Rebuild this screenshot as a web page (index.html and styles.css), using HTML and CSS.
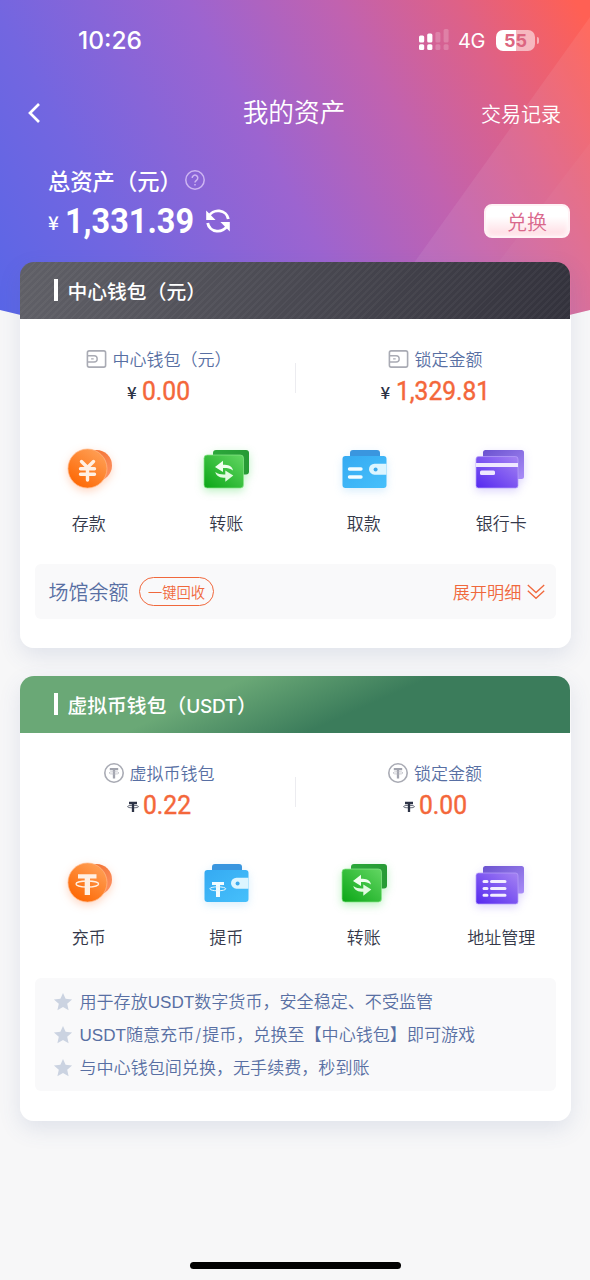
FILE: index.html
```html
<!DOCTYPE html>
<html lang="zh-CN">
<head>
<meta charset="utf-8">
<title>我的资产</title>
<link rel="stylesheet" href="styles.css">
</head>
<body>
<svg class="defs" width="0" height="0" aria-hidden="true">
  <defs>
    <linearGradient id="orange" x1="0.9" y1="0" x2="0.2" y2="1"><stop offset="0" stop-color="#ffa45c"/><stop offset="1" stop-color="#fd6500"/></linearGradient>
    <linearGradient id="orangeBack" x1="0" y1="0" x2="1" y2="1"><stop offset="0" stop-color="#ef6a22"/><stop offset="1" stop-color="#ff9468"/></linearGradient>
    <linearGradient id="green" x1="1" y1="0" x2="0" y2="1"><stop offset="0" stop-color="#63d663"/><stop offset="1" stop-color="#0aa616"/></linearGradient>
    <linearGradient id="greenBack" x1="0" y1="0" x2="1" y2="0"><stop offset="0" stop-color="#2ba83a"/><stop offset="1" stop-color="#279a35"/></linearGradient>
    <linearGradient id="blue" x1="0" y1="0" x2="1" y2="1"><stop offset="0" stop-color="#35aaf2"/><stop offset="1" stop-color="#46c0fb"/></linearGradient>
    <linearGradient id="purple" x1="1" y1="0" x2="0" y2="1"><stop offset="0" stop-color="#a583f2"/><stop offset="1" stop-color="#5428f0"/></linearGradient>
    <linearGradient id="purpleBack" x1="0" y1="0" x2="1" y2="1"><stop offset="0" stop-color="#6a52cf"/><stop offset="1" stop-color="#a98cf8"/></linearGradient>
    <symbol id="i-wallet" viewBox="0 0 20 18">
      <rect x="0.9" y="0.9" width="18.2" height="16.2" rx="1.8" fill="none" stroke="#a9abb4" stroke-width="1.6"/>
      <path d="M1 5.8h6.600a3.100 3.100 0 0 1 0 6.200H1M4.600 8.900h2.600" fill="none" stroke="#a9abb4" stroke-width="1.400"/>
    </symbol>
    <symbol id="i-token" viewBox="0 0 20 20">
      <circle cx="10" cy="10" r="9.2" fill="none" stroke="#a9abb4" stroke-width="1.6"/>
      <path d="M5.800 6.200h8.400M10 6.200v9.300" fill="none" stroke="#a2a4ae" stroke-width="2.3"/>
      <ellipse cx="10" cy="9.900" rx="5" ry="1.200" fill="none" stroke="#b4b6be" stroke-width="0.7"/>
    </symbol>
    <symbol id="i-unit" viewBox="0 0 12 12">
      <path d="M2 2h8M6 2v9" fill="none" stroke="#2d3346" stroke-width="2.3"/>
      <ellipse cx="6" cy="5.600" rx="5.500" ry="1.300" fill="none" stroke="#2d3346" stroke-width="0.7"/>
    </symbol>
    <symbol id="i-star" viewBox="0 0 20 20">
      <path d="M10 .9l2.600 5.800 6.500.7-4.900 4.300 1.400 6.500L10 15l-5.600 3.200 1.400-6.500L.9 7.400l6.500-.7z" fill="#cbd3e1"/>
    </symbol>
    <symbol id="i-transfer" viewBox="0 0 60 56">
      <rect x="17" y="8" width="36" height="24.500" rx="3" fill="url(#greenBack)"/>
      <rect x="8" y="13" width="39.500" height="33" rx="3.200" fill="url(#green)" stroke="#8ae68b" stroke-width="0.7"/>
      <path d="M19 25l8-6.200v4c5 0 9 1 10 5.700-3-2.300-6-2.500-10-2.400v4z" fill="#efffef"/>
      <path d="M37.300 33.500l-8 6.200v-4c-5 0-9-1-10-5.700 3 2.300 6 2.500 10 2.400v-4z" fill="#e2fbe2"/>
    </symbol>
  </defs>
</svg>

<div class="page">
  <svg class="hero-bg" viewBox="0 0 590 320" aria-hidden="true">
    <defs>
      <linearGradient id="hero" gradientUnits="userSpaceOnUse" x1="-8" y1="310" x2="575" y2="0">
        <stop offset="0" stop-color="#5866e7"/><stop offset="0.22" stop-color="#7366e0"/><stop offset="0.48" stop-color="#9c64d0"/><stop offset="0.68" stop-color="#c162af"/><stop offset="0.84" stop-color="#de6187"/><stop offset="1" stop-color="#ff6054"/>
      </linearGradient>
      <clipPath id="curve"><path d="M0 0H590V310Q295 384 0 310Z"/></clipPath>
    </defs>
    <g clip-path="url(#curve)">
      <rect width="590" height="320" fill="url(#hero)"/>
      <path d="M590 17V320H373z" fill="#fff" fill-opacity="0.07"/>
      <path d="M590 143V320H454z" fill="#fff" fill-opacity="0.03"/>
    </g>
  </svg>

  <header class="status">
    <span class="clock">10:26</span>
    <div class="status-right">
      <svg width="30" height="22" viewBox="0 0 30 22" fill="#fff">
        <rect x="0" y="6.500" width="5.200" height="7" rx="1.500"/><rect x="0" y="15.300" width="5.200" height="5.700" rx="1.500"/>
        <rect x="8.200" y="4.500" width="5.200" height="9" rx="1.500"/><rect x="8.200" y="15.300" width="5.200" height="5.700" rx="1.500"/>
        <g fill-opacity=".2"><rect x="16.400" y="3" width="5" height="10.500" rx="1.500"/><rect x="16.400" y="15.300" width="5" height="5.700" rx="1.500"/>
        <rect x="24.600" y="0" width="5" height="13.500" rx="1.500"/><rect x="24.600" y="15.300" width="5" height="5.700" rx="1.500"/></g>
      </svg>
      <span class="net">4G</span>
      <span class="battery"><span class="battery-level">55</span></span>
    </div>
  </header>

  <nav class="nav">
    <svg class="back" width="14" height="22" viewBox="0 0 14 22"><path d="M12 2L3 11l9 9" fill="none" stroke="#fff" stroke-width="2.700"/></svg>
    <h1 class="title">我的资产</h1>
    <a class="records">交易记录</a>
  </nav>

  <section class="total">
    <div class="total-main">
      <div class="total-label"><span>总资产（元）</span>
        <svg width="20" height="20" viewBox="0 0 20 20" fill="none" stroke="#cdb5f2" stroke-width="1.500"><circle cx="10" cy="10" r="9.200"/><path d="M7.200 8a2.800 2.800 0 1 1 4.300 2.300c-1 .7-1.500 1.100-1.500 2.300M10 13.900v1.600"/></svg>
      </div>
      <div class="total-value">
        <span class="yen">¥</span>
        <svg class="num" width="129" height="38"><text x="0" y="30" font-size="35.500" font-weight="700" fill="#fff" textLength="129" lengthAdjust="spacingAndGlyphs">1,331.39</text></svg>
        <svg class="refresh" width="26" height="26" viewBox="0 0 26 26"><g fill="none" stroke="#fff" stroke-width="2.900"><path d="M3.600 8.800A10.300 9.600 0 0 1 23.300 11"/><path d="M22.400 17.200A10.300 9.600 0 0 1 2.700 15"/></g><path d="M1.200 2.500V12H10.600zM24.800 23.500V14H15.400z" fill="#fff"/></svg>
      </div>
    </div>
    <button class="exchange">兑换</button>
  </section>

  <section class="card">
    <h2 class="card-head dark"><i class="mark"></i><span>中心钱包（元）</span></h2>
    <div class="balances">
      <div class="balance center-balance">
        <div class="balance-label"><svg width="21" height="18"><use href="#i-wallet"/></svg><span>中心钱包（元）</span></div>
        <div class="balance-value"><span class="unit">¥</span><svg class="num" width="48" height="30"><text x="0" y="24" textLength="48" lengthAdjust="spacingAndGlyphs">0.00</text></svg></div>
      </div>
      <div class="balance locked">
        <div class="balance-label"><svg width="21" height="18"><use href="#i-wallet"/></svg>锁定金额</div>
        <div class="balance-value"><span class="unit">¥</span><svg class="num" width="94" height="30"><text x="0" y="24" textLength="94" lengthAdjust="spacingAndGlyphs">1,329.81</text></svg></div>
      </div>
    </div>
    <div class="actions">
      <div class="action">
        <svg class="glow-orange" width="60" height="56" viewBox="0 0 60 56"><circle cx="37.500" cy="23.500" r="15.500" fill="url(#orangeBack)"/><circle cx="28.500" cy="26.500" r="19.500" fill="url(#orange)" stroke="#ffb98a" stroke-width=".7"/><path d="M22.500 19.500l6 6 6-6M21.500 26.800h14M21.500 32.200h14M28.500 26v12" fill="none" stroke="#fff0e4" stroke-width="3.400" stroke-linecap="round"/></svg>
        <span>存款</span>
      </div>
      <div class="action"><svg class="glow-green" width="60" height="56"><use href="#i-transfer"/></svg><span>转账</span></div>
      <div class="action">
        <svg class="glow-blue" width="60" height="56" viewBox="0 0 60 56"><rect x="16" y="8" width="30" height="14" rx="3" fill="#3a96df"/><rect x="8.500" y="14" width="44" height="32" rx="3" fill="url(#blue)"/><path d="M52.500 21.700H40.500a5.500 5.500 0 0 0 0 11H52.500z" fill="#dcf5ff"/><circle cx="41.600" cy="27.500" r="2" fill="#3ca9ec"/><path d="M15.500 27H27M15.500 35H27" stroke="#f2fcff" stroke-width="3.400" stroke-linecap="round"/></svg>
        <span>取款</span>
      </div>
      <div class="action">
        <svg class="glow-purple" width="60" height="56" viewBox="0 0 60 56"><rect x="12" y="8" width="41" height="29" rx="2.500" fill="url(#purpleBack)"/><rect x="5" y="14.500" width="42" height="31.500" rx="2.500" fill="url(#purple)" stroke="#b7a0fa" stroke-width=".7"/><path d="M5 21H47V25H5z" fill="#eee8ff"/><rect x="9" y="28.500" width="15" height="4.500" rx="1.500" fill="#eee8ff"/></svg>
        <span>银行卡</span>
      </div>
    </div>
    <div class="venue">
      <span class="venue-label">场馆余额</span>
      <button class="recover">一键回收</button>
      <a class="expand">展开明细<svg width="18" height="16" viewBox="0 0 18 16"><path d="M.8 1L9 8.500 17.200 1M.8 6.700L9 14.300 17.200 6.700" fill="none" stroke="#f0683c" stroke-width="1.300"/></svg></a>
    </div>
  </section>

  <section class="card">
    <h2 class="card-head teal"><i class="mark"></i><span>虚拟币钱包（<span class="latin">USDT</span>）</span></h2>
    <div class="balances">
      <div class="balance token-balance">
        <div class="balance-label"><svg width="20" height="20"><use href="#i-token"/></svg>虚拟币钱包</div>
        <div class="balance-value"><svg class="unit-token" width="12" height="12"><use href="#i-unit"/></svg><svg class="num" width="48" height="30"><text x="0" y="24" textLength="48" lengthAdjust="spacingAndGlyphs">0.22</text></svg></div>
      </div>
      <div class="balance locked">
        <div class="balance-label"><svg width="20" height="20"><use href="#i-token"/></svg>锁定金额</div>
        <div class="balance-value"><svg class="unit-token" width="12" height="12"><use href="#i-unit"/></svg><svg class="num" width="48" height="30"><text x="0" y="24" textLength="48" lengthAdjust="spacingAndGlyphs">0.00</text></svg></div>
      </div>
    </div>
    <div class="actions">
      <div class="action">
        <svg class="glow-orange" width="60" height="56" viewBox="0 0 60 56"><circle cx="37.500" cy="23.500" r="15.500" fill="url(#orangeBack)"/><circle cx="28.500" cy="26.500" r="19.500" fill="url(#orange)" stroke="#ffb98a" stroke-width=".7"/><path d="M19 18.200H37.500V22.500H31V39H25.700V22.500H19z" fill="#fff0e4"/><ellipse cx="28.300" cy="28" rx="11.300" ry="3" fill="none" stroke="#fff0e4" stroke-width="1.300"/></svg>
        <span>充币</span>
      </div>
      <div class="action">
        <svg class="glow-blue" width="60" height="56" viewBox="0 0 60 56"><rect x="16" y="8" width="30" height="14" rx="3" fill="#3a96df"/><rect x="8.500" y="14" width="44" height="32" rx="3" fill="url(#blue)"/><path d="M52.500 21.700H40.500a5.500 5.500 0 0 0 0 11H52.500z" fill="#dcf5ff"/><circle cx="41.600" cy="27.500" r="2" fill="#3ca9ec"/><path d="M16 26H28V29H24V41H20V29H16z" fill="#f2fcff"/><ellipse cx="21.800" cy="32.800" rx="8" ry="2" fill="none" stroke="#e6f8ff" stroke-width="1"/></svg>
        <span>提币</span>
      </div>
      <div class="action"><svg class="glow-green" width="60" height="56"><use href="#i-transfer"/></svg><span>转账</span></div>
      <div class="action">
        <svg class="glow-purple" width="60" height="56" viewBox="0 0 60 56"><rect x="12" y="10" width="41" height="27.500" rx="2.500" fill="url(#purpleBack)"/><rect x="5" y="17" width="42" height="31" rx="2.500" fill="url(#purple)" stroke="#b7a0fa" stroke-width=".7"/><path d="M13 25.600H16M20.500 25.600H34M13 32.400H16M20.500 32.400H34M13 39.300H16M20.500 39.300H34" stroke="#f2edff" stroke-width="3" stroke-linecap="round"/></svg>
        <span>地址管理</span>
      </div>
    </div>
    <ul class="notes">
      <li><svg width="20" height="20"><use href="#i-star"/></svg><span>用于存放USDT数字货币，安全稳定、不受监管</span></li>
      <li><svg width="20" height="20"><use href="#i-star"/></svg><span>USDT随意充币<span class="slash">/</span>提币，兑换至【中心钱包】即可游戏</span></li>
      <li><svg width="20" height="20"><use href="#i-star"/></svg><span>与中心钱包间兑换，无手续费，秒到账</span></li>
    </ul>
  </section>

  <div class="home-bar"></div>
</div>
</body>
</html>
```
FILE: styles.css
```css
* { box-sizing: border-box; margin: 0; padding: 0; }
body { background: #f7f7f8; font-family: "Liberation Sans", "Noto Sans CJK SC", sans-serif; font-weight: 350; }
svg { display: block; flex: none; }
.defs { position: absolute; }
.page { position: relative; width: 590px; height: 1280px; overflow: hidden; display: flex; flex-direction: column; }
.hero-bg { position: absolute; left: 0; top: 0; width: 590px; height: 320px; }
.status, .nav, .total, .card { position: relative; }

.status { height: 80px; padding: 0 52px 0 78px; display: flex; align-items: center; justify-content: space-between; color: #fff; font-family: Inter, sans-serif; }
.clock { font-size: 24.500px; font-weight: 500; }
.status-right { display: flex; align-items: center; }
.net { margin: 2px 0 0 9px; width: 38px; font-size: 20px; font-weight: 400; letter-spacing: -.3px; }
.battery { position: relative; width: 39px; height: 21px; border-radius: 7px; background: linear-gradient(90deg, #fff 52%, rgba(255,255,255,.55) 52%); margin-right: 3px; text-align: center; }
.battery::after { content: ""; position: absolute; right: -4px; top: 7px; width: 2.500px; height: 7px; border-radius: 0 3px 3px 0; background: rgba(255,255,255,.5); }
.battery-level { display: block; font-size: 18px; line-height: 21px; font-weight: 700; color: #dc6580; }

.nav { height: 64px; display: grid; grid-template-columns: 1fr auto 1fr; align-items: center; padding: 0 29px 0 27px; color: #fff; }
.back { margin-top: 2px; }
.title { font-size: 25.700px; font-weight: 350; line-height: 36px; margin-top: 2px; }
.records { justify-self: end; font-size: 20px; margin-top: 3px; }

.total { height: 118px; display: flex; justify-content: space-between; padding: 21px 20px 0 48px; color: #fff; }
.total-label { display: flex; align-items: center; gap: 3px; height: 30px; font-size: 22.300px; font-weight: 500; }
.total-value { display: flex; align-items: center; height: 38px; margin-top: 8px; }
.yen { font-family: "Noto Sans CJK SC", sans-serif; font-size: 19px; font-weight: 500; width: 17px; line-height: 30px; }
.num { font-family: Roboto, sans-serif; overflow: visible; }
.refresh { margin: -2px 0 0 11px; }
.exchange { width: 86px; height: 34px; margin-top: 39px; border: 2px solid #fff2f5; border-radius: 8px; background: linear-gradient(#fff 35%, #ffdbe2); font: 350 20px/29px "Noto Sans CJK SC", sans-serif; color: #d9688c; box-shadow: inset 0 0 5px #fff; }

.card { width: 551px; margin: 0 0 28px 19.500px; height: 386px; background: linear-gradient(transparent 56px, #fff 56px); border-radius: 14px; box-shadow: 0 8px 22px rgba(70,90,150,.13); }
.card + .card { height: 444.500px; margin-bottom: 0; }
.card-head { display: flex; align-items: center; gap: 10px; width: 550px; height: 57px; margin: 0 auto; padding: 0 0 1px 34px; border-radius: 14px 14px 0 0; color: #fff; font-size: 19.800px; font-weight: 500; }
.mark { width: 3.500px; height: 22px; background: #fff; }
.dark { background: repeating-linear-gradient(135deg, rgba(255,255,255,.035) 0 2px, transparent 2px 5px), linear-gradient(100deg, #606067, #33323c); }
.teal { background: linear-gradient(156deg, #6aa876 34%, #3b7c5b 61%); }
.latin { font-family: Inter, sans-serif; font-size: 19px; letter-spacing: -.3px; }

.balances { display: flex; height: 123px; padding-top: 25px; background: linear-gradient(#ececf0, #ececf0) 275px 44px / 1px 30px no-repeat; }
.balance { width: 275px; display: flex; flex-direction: column; align-items: center; }
.center-balance { padding-left: 3px; }
.locked { padding-left: 6px; }
.token-balance { padding-left: 4px; }
.balance-label { display: flex; align-items: center; gap: 6px; height: 28px; font-size: 17px; color: #586fa3; }
.balance-label svg { margin-top: 2px; }
.balance-value { display: flex; align-items: center; height: 30px; margin-top: 4px; }
.balance-value .num { font-size: 26px; fill: #f4673a; stroke: #f4673a; stroke-width: .45px; }
.balance-value .num text { font-weight: 400; }
.unit { font-family: "Noto Sans CJK SC", sans-serif; font-size: 17px; font-weight: 500; line-height: 26px; width: 15px; margin-top: 2px; color: #2d3346; }
.unit-token { margin: 4px 4px 0 0; }

.actions { display: flex; width: 550px; height: 123px; margin: 0 auto; }
.action { flex: 1; display: flex; flex-direction: column; align-items: center; font-size: 17px; line-height: 26px; color: #343849; }
.action span { margin-top: 14px; }
.glow-orange { filter: drop-shadow(0 3px 4px rgba(255,110,40,.28)); }
.glow-green { filter: drop-shadow(0 3px 4px rgba(40,210,60,.3)); }
.glow-blue { filter: drop-shadow(0 3px 4px rgba(60,170,240,.2)); }
.glow-purple { filter: drop-shadow(0 3px 4px rgba(100,70,240,.22)); }

.venue, .notes { width: 521px; margin: 0 auto; background: #f9f9fa; border-radius: 6px; }
.venue { display: flex; align-items: center; height: 55px; padding: 0 11px 0 14px; margin-top: -1px; }
.venue-label { font-size: 20px; color: #586fa3; }
.recover { width: 75px; height: 29px; margin-left: 10.500px; border: 1.500px solid #f0683c; border-radius: 15px; background: none; font: 350 14.300px/23px "Noto Sans CJK SC", sans-serif; color: #f0683c; white-space: nowrap; }
.expand { margin-left: auto; display: flex; align-items: center; gap: 5px; font-size: 17.200px; color: #f0683c; }
.notes { height: 113px; margin-top: -1px; padding: 6px 0 0 18px; list-style: none; }
.notes li { display: flex; align-items: center; gap: 7px; height: 33px; font-size: 17.070px; color: #586fa3; white-space: nowrap; }
.notes svg { margin-top: 2px; }
.slash { font-family: Inter, sans-serif; padding: 0 1px; }

.home-bar { width: 211px; height: 7px; margin: auto auto 11px; border-radius: 4px; background: #000; }
```
